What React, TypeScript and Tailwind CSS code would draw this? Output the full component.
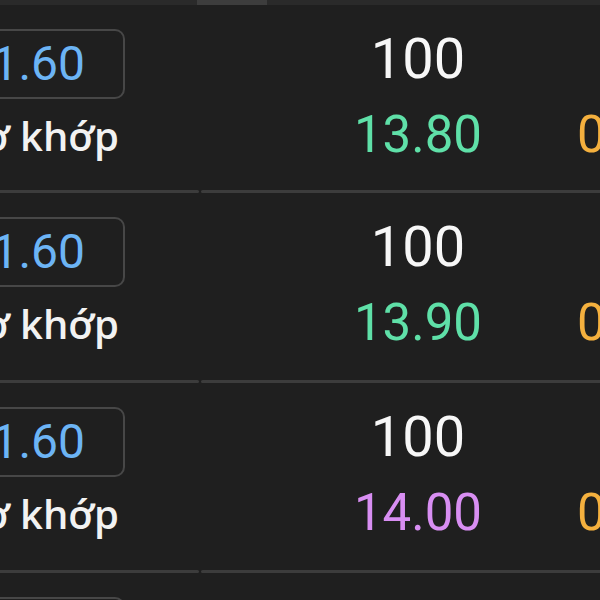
import { FC } from 'react';

interface IOrderRow {
  price: string;
  qty: string;
  matched: string;
  matchedColor: string;
  first?: boolean;
}

const orders: IOrderRow[] = [
  { price: '11.60', qty: '100', matched: '13.80', matchedColor: 'text-[#5fe0a8]', first: true },
  { price: '11.60', qty: '100', matched: '13.90', matchedColor: 'text-[#5fe0a8]' },
  { price: '11.60', qty: '100', matched: '14.00', matchedColor: 'text-[#d88ef2]' },
  { price: '11.60', qty: '100', matched: '14.10', matchedColor: 'text-[#d88ef2]' },
];

const Divider: FC = () => (
  <div className="flex gap-[2px] h-[3px] shrink-0">
    <div className="w-[199px] bg-[#3c3c3c] rounded-r-full" />
    <div className="flex-1 bg-[#3c3c3c] rounded-l-full" />
  </div>
);

const OrderRow: FC<IOrderRow> = props => {
  const { price, qty, matched, matchedColor, first } = props;

  return (
    <div>
      <div className={`flex shrink-0 ${first ? 'h-[185px]' : 'h-[187px]'}`}>
        <div className="w-[200px] shrink-0">
          <div className="mt-[24px] ml-[-80px] w-[205px] h-[70px] border-2 border-[#474747] rounded-[10px] flex items-center justify-end pr-[38px]">
            <span className="font-['Roboto'] text-[48px] leading-none text-[#6cb4f5]">{price}</span>
          </div>
          <div className="mt-[17px] ml-[-80px] w-[199px] text-right font-['Open_Sans'] font-semibold text-[40px] leading-none text-[#f2f2f2] whitespace-nowrap">
            Chờ khớp
          </div>
        </div>
        <div className="ml-[118px] w-[200px] shrink-0 text-center font-['Roboto']">
          <div className="pt-[26px] text-[56px] leading-none text-[#f7f7f7]">{qty}</div>
          <div className={`mt-[22px] text-[51px] leading-none ${matchedColor}`}>{matched}</div>
        </div>
        <div className="ml-[59px] shrink-0 font-['Roboto']">
          <div className="pt-[104px] text-[51px] leading-none text-[#f4b03e] whitespace-nowrap">0.00</div>
        </div>
      </div>
      <Divider />
    </div>
  );
};

const App: FC = () => {
  return (
    <div className="w-[600px] h-[600px] overflow-hidden bg-[#1f1f1f]">
      <div className="h-[5px] bg-[#2a2a2a] flex">
        <div className="ml-[197px] w-[70px] h-full bg-[#3d3d3d]" />
      </div>
      {orders.map((o, i) => (
        <OrderRow key={i} {...o} />
      ))}
    </div>
  );
};

export default App;
